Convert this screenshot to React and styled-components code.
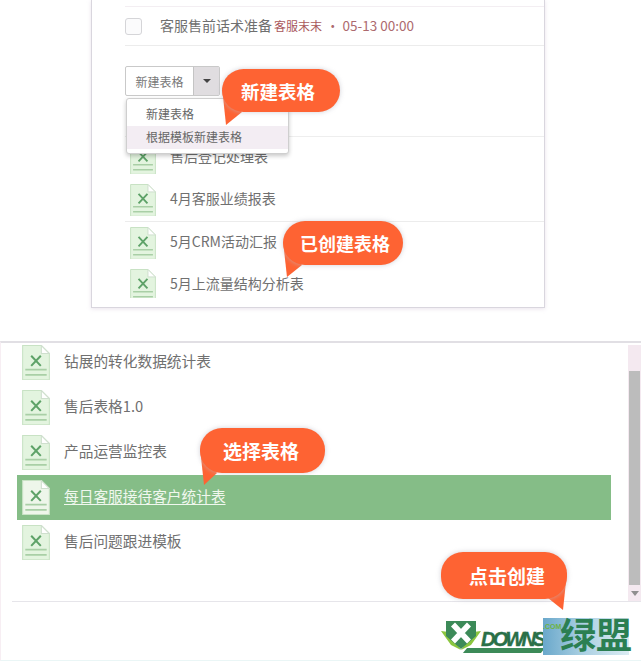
import React from 'react';
import styled, { createGlobalStyle } from 'styled-components';

const GlobalStyle = createGlobalStyle`
  html, body {
    margin: 0;
    padding: 0;
    background: #fff;
  }
  body {
    font-family: "Noto Sans CJK SC", "Liberation Sans", sans-serif;
    overflow: hidden;
  }
`;

const Page = styled.div`
  position: relative;
  width: 641px;
  height: 661px;
  overflow: hidden;
  background: #fff;
`;

const TopPanel = styled.div`
  position: relative;
  box-sizing: border-box;
  width: 454px;
  height: 308px;
  margin-left: 91px;
  padding: 6px 0 0 33px;
  border: 1px solid #d9d6de;
  border-top: none;
  box-shadow: 0 1px 4px rgba(225, 215, 228, 0.7);
  overflow: hidden;
`;

const TaskRow = styled.div`
  display: flex;
  align-items: center;
  height: 40px;
  box-sizing: border-box;
  border-top: 1px solid #f3eef2;
  border-bottom: 1px solid #ececec;
`;

const Checkbox = styled.span`
  box-sizing: border-box;
  width: 17px;
  height: 17px;
  border: 1px solid #d5d5d8;
  border-radius: 3px;
  background: #fbfbfc;
  margin-right: 18px;
`;

const TaskName = styled.span`
  margin-top: -2px;
  font-size: 14px;
  color: #6f6f6f;
`;

const TaskOwner = styled.span`
  margin: -2px 0 0 2px;
  font-size: 12px;
  color: #a9585c;
`;

const TaskDate = styled.span`
  margin: -2px 0 0 4px;
  font-size: 13.5px;
  color: #ad6a6e;
  white-space: pre;
`;

const SplitButton = styled.div`
  display: flex;
  box-sizing: border-box;
  width: 95px;
  height: 30px;
  margin-top: 20px;
  border: 1px solid #c9c9c9;
  border-radius: 2px;
`;

const ButtonLabel = styled.span`
  flex: 1;
  display: flex;
  align-items: center;
  justify-content: center;
  font-size: 12px;
  color: #777;
`;

const ButtonCaret = styled.span`
  display: flex;
  align-items: center;
  justify-content: center;
  width: 25px;
  background: #e0dde0;
  border-left: 1px solid #c4c4c4;
  &::before {
    content: "";
    border: 4px solid transparent;
    border-top: 4px solid #444;
    border-bottom: none;
  }
`;

const FileList = styled.div`
  height: 161px;
  margin-top: 40px;
  border-top: 1px solid #eeeeee;
  overflow: hidden;
`;

const TopRow = styled.div`
  display: flex;
  align-items: center;
  height: 42px;
  padding-left: 5px;
  gap: 14px;
  border-bottom: ${p => (p.$line ? '1px solid #ececec' : 'none')};
`;

const FileName = styled.span`
  margin-top: -4px;
  font-size: 14px;
  color: #707070;
  white-space: nowrap;
`;

const Dropdown = styled.div`
  position: absolute;
  left: 34px;
  top: 98px;
  box-sizing: border-box;
  width: 163px;
  height: 56px;
  padding-top: 4px;
  background: #fff;
  border: 1px solid #cfcfcf;
  border-radius: 3px;
  box-shadow: 0 2px 4px rgba(0, 0, 0, 0.22);
`;

const DropdownItem = styled.div`
  height: 23px;
  line-height: 22px;
  padding-left: 19px;
  font-size: 12px;
  color: #666;
  background: ${p => (p.$active ? '#f3edf3' : 'transparent')};
`;

const BottomPanel = styled.div`
  position: relative;
  box-sizing: border-box;
  height: 320px;
  margin-top: 33px;
  border-top: 2px solid #e1dfe4;
  border-left: 1px solid #f7eef3;
  border-bottom: 1px solid #eaf6f6;
`;

const Scrollbar = styled.div`
  position: absolute;
  right: 0;
  top: 2px;
  width: 13px;
  height: 256px;
  background: #f4e9f0;
  display: flex;
  flex-direction: column;
`;

const ScrollThumb = styled.div`
  width: 11px;
  height: 214px;
  margin: 26px 0 0 1px;
  background: #bcbcbc;
`;

const ScrollArrow = styled.div`
  margin: 6px auto 0;
  border: 4px solid transparent;
  border-top: 5px solid #8f8f8f;
  border-bottom: none;
`;

const ListBody = styled.div`
  height: 261px;
  margin-top: -3px;
`;

const BottomRow = styled.div`
  display: flex;
  align-items: center;
  box-sizing: border-box;
  width: 594px;
  height: 45px;
  margin-left: 16px;
  padding-left: 5px;
  gap: 14px;
  background: ${p => (p.$selected ? '#85bd87' : 'transparent')};
`;

const BottomName = styled.span`
  margin-top: -4px;
  font-size: 14.7px;
  color: ${p => (p.$selected ? '#f0f7ee' : '#707070')};
  text-decoration: ${p => (p.$selected ? 'underline' : 'none')};
  text-underline-offset: 2px;
  white-space: nowrap;
`;

const Footer = styled.div`
  margin-left: 11px;
  border-top: 1px solid #e6e5ea;
`;

const Bubble = styled.div`
  position: absolute;
  left: ${p => p.$x}px;
  top: ${p => p.$y}px;
  width: ${p => p.$w}px;
  height: ${p => p.$h}px;
  box-sizing: border-box;
  padding-left: ${p => p.$pad}px;
  display: flex;
  align-items: center;
  background: #fe6333;
  border-radius: 22px;
  color: #fff;
  font-size: ${p => p.$size}px;
  font-weight: 700;
  white-space: nowrap;
  box-shadow: 0 0 5px rgba(190, 190, 200, 0.7);
`;

const Tail = styled.svg`
  position: absolute;
  left: ${p => p.$x}px;
  top: ${p => p.$y}px;
  overflow: visible;
`;

const Logo = styled.div`
  position: absolute;
  left: 441px;
  top: 618px;
  display: flex;
  width: 190px;
  height: 37px;
`;

const LogoMark = styled.svg`
  flex-shrink: 0;
  margin-top: 3px;
`;

const LogoWordWrap = styled.div`
  position: relative;
  box-sizing: border-box;
  width: 62px;
  padding-top: 13px;
`;

const LogoWord = styled.span`
  display: block;
  font-family: "Liberation Sans", sans-serif;
  font-size: 20px;
  line-height: 17px;
  font-weight: 700;
  font-style: italic;
  color: #2a7048;
  letter-spacing: -2.8px;
  -webkit-text-stroke: 0.4px #2a7048;
`;

const LogoBar = styled.div`
  position: absolute;
  left: -16px;
  top: 30px;
  width: 78px;
  height: 5px;
  background: #3c8a58;
  transform: skewX(-40deg);
`;

const LogoBox = styled.div`
  position: relative;
  display: flex;
  justify-content: flex-end;
  width: 86px;
  background: linear-gradient(90deg, #6aa8cb 0%, #a9cfe2 45%, #dcecf3 100%);
`;

const LogoCom = styled.span`
  position: absolute;
  left: 0;
  top: 5px;
  font-family: "Liberation Sans", sans-serif;
  font-size: 7px;
  line-height: 7px;
  font-weight: 700;
  color: #6fb33f;
`;

const LogoCn = styled.span`
  margin: -3px -3px 0 0;
  font-size: 36px;
  line-height: 36px;
  font-weight: 700;
  color: #2b7f52;
  white-space: nowrap;
`;

function FileIcon({ selected, w }) {
  return (
    <svg width={w} height={w * 1.26} viewBox="0 0 26 33" style={{ flexShrink: 0 }}>
      <path d="M0.5 0.5H18L25.5 8V32.5H0.5Z" fill={selected ? '#eef6ea' : '#e3f4df'} stroke="#c8e2c4" />
      <path d="M18 0.5V8H25.5Z" fill="#fff" stroke="#cfdfce" />
      <path d="M8.5 10L17.5 19.5M17.5 10L8.5 19.5" stroke="#5ea268" strokeWidth="1.9" />
      <path d="M3 23H23M3 28H23" stroke="#a9cfa6" strokeWidth="1.5" />
    </svg>
  );
}

const topFiles = [
  { name: '售后登记处理表' },
  { name: '4月客服业绩报表', line: true },
  { name: '5月CRM活动汇报' },
  { name: '5月上流量结构分析表' },
];

const bottomFiles = ['钻展的转化数据统计表', '售后表格1.0', '产品运营监控表', '每日客服接待客户统计表', '售后问题跟进模板'];

const bubbles = [
  { text: '新建表格', x: 222, y: 69, w: 118, h: 43, pad: 19, size: 18.5, tail: 'M0 18L4 56L20 43Z' },
  { text: '已创建表格', x: 283, y: 221, w: 120, h: 44, pad: 17, size: 18, tail: 'M0 20L4 56L19 44Z' },
  { text: '选择表格', x: 200, y: 428, w: 125, h: 45, pad: 23, size: 19, tail: 'M0 20L4 57L17 45Z' },
  { text: '点击创建', x: 441, y: 552, w: 126, h: 47, pad: 28, size: 19, tail: 'M107 46L122 58L126 20Z' },
];

export default function App() {
  return (
    <Page>
      <GlobalStyle />
      <TopPanel>
        <TaskRow>
          <Checkbox />
          <TaskName>客服售前话术准备</TaskName>
          <TaskOwner>客服末末</TaskOwner>
          <TaskDate>· 05-13 00:00</TaskDate>
        </TaskRow>
        <SplitButton>
          <ButtonLabel>新建表格</ButtonLabel>
          <ButtonCaret />
        </SplitButton>
        <FileList>
          {topFiles.map(file => (
            <TopRow key={file.name} $line={file.line}>
              <FileIcon w={26} />
              <FileName>{file.name}</FileName>
            </TopRow>
          ))}
        </FileList>
        <Dropdown>
          <DropdownItem>新建表格</DropdownItem>
          <DropdownItem $active>根据模板新建表格</DropdownItem>
        </Dropdown>
      </TopPanel>

      <BottomPanel>
        <ListBody>
          {bottomFiles.map((name, i) => (
            <BottomRow key={name} $selected={i === 3}>
              <FileIcon w={28} selected={i === 3} />
              <BottomName $selected={i === 3}>{name}</BottomName>
            </BottomRow>
          ))}
        </ListBody>
        <Scrollbar>
          <ScrollThumb />
          <ScrollArrow />
        </Scrollbar>
        <Footer />
      </BottomPanel>

      {bubbles.map(b => (
        <React.Fragment key={b.text}>
          <Tail $x={b.x} $y={b.y} width="10" height="10">
            <path d={b.tail} fill="#fe6333" />
          </Tail>
          <Bubble $x={b.x} $y={b.y} $w={b.w} $h={b.h} $pad={b.pad} $size={b.size}>{b.text}</Bubble>
        </React.Fragment>
      ))}

      <Logo>
        <LogoMark width="40" height="32" viewBox="0 0 40 32">
          <path d="M0 10L8 11L20 29L10 24ZM40 10L32 11L20 29L30 24Z" fill="#8cc63f" />
          <path d="M5 0H35V15L20 28L5 15Z" fill="#3c8a58" />
          <path d="M12 3.5L28 20.5M28 3.5L12 20.5" stroke="#fff" strokeWidth="5.5" fill="none" />
        </LogoMark>
        <LogoWordWrap>
          <LogoWord>DOWNS</LogoWord>
          <LogoBar />
        </LogoWordWrap>
        <LogoBox>
          <LogoCom>.COM</LogoCom>
          <LogoCn>绿盟</LogoCn>
        </LogoBox>
      </Logo>
    </Page>
  );
}
